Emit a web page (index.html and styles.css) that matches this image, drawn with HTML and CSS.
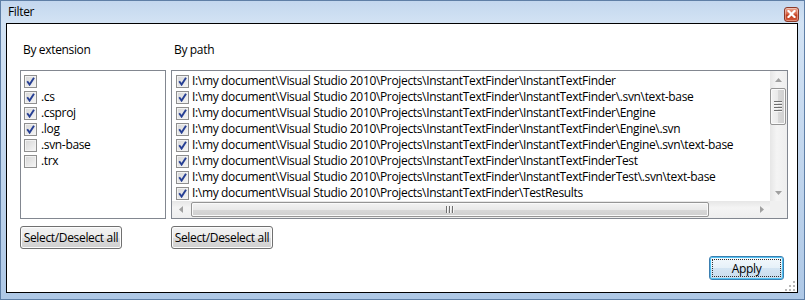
FILE: index.html
```html
<!DOCTYPE html>
<html>
<head><meta charset="utf-8"><title>Filter</title>
<link rel="stylesheet" href="styles.css">
</head>
<body>
<div class="win">
 <div class="title">
  <span class="caption">Filter</span>
  <span class="close"><svg width="9" height="8" viewBox="0 0 9 8"><path d="M1.5 1 L7.5 7 M7.5 1 L1.5 7" stroke="#fff" stroke-width="2.2" stroke-linecap="square"/></svg></span>
 </div>
 <div class="client">
  <div class="cols">
   <div class="col ext">
    <div class="lbl">By extension</div>
    <div class="list">
     <div class="row"><span class="cb on"></span><span></span></div>
     <div class="row"><span class="cb on"></span><span>.cs</span></div>
     <div class="row"><span class="cb on"></span><span>.csproj</span></div>
     <div class="row"><span class="cb on"></span><span>.log</span></div>
     <div class="row"><span class="cb"></span><span>.svn-base</span></div>
     <div class="row"><span class="cb"></span><span>.trx</span></div>
    </div>
    <button class="btn">Select/Deselect all</button>
   </div>
   <div class="col path">
    <div class="lbl">By path</div>
    <div class="list scroll">
     <div class="rows">
      <div class="row"><span class="cb on"></span><span>I:\my document\Visual Studio 2010\Projects\InstantTextFinder\InstantTextFinder</span></div>
      <div class="row"><span class="cb on"></span><span>I:\my document\Visual Studio 2010\Projects\InstantTextFinder\InstantTextFinder\.svn\text-base</span></div>
      <div class="row"><span class="cb on"></span><span>I:\my document\Visual Studio 2010\Projects\InstantTextFinder\InstantTextFinder\Engine</span></div>
      <div class="row"><span class="cb on"></span><span>I:\my document\Visual Studio 2010\Projects\InstantTextFinder\InstantTextFinder\Engine\.svn</span></div>
      <div class="row"><span class="cb on"></span><span>I:\my document\Visual Studio 2010\Projects\InstantTextFinder\InstantTextFinder\Engine\.svn\text-base</span></div>
      <div class="row"><span class="cb on"></span><span>I:\my document\Visual Studio 2010\Projects\InstantTextFinder\InstantTextFinderTest</span></div>
      <div class="row"><span class="cb on"></span><span>I:\my document\Visual Studio 2010\Projects\InstantTextFinder\InstantTextFinderTest\.svn\text-base</span></div>
      <div class="row"><span class="cb on"></span><span>I:\my document\Visual Studio 2010\Projects\InstantTextFinder\TestResults</span></div>
     </div>
     <div class="vbar">
      <span class="arr"><svg width="7" height="4"><path d="M0 4 L3.5 0 L7 4Z" fill="#a0a0a0"/></svg></span>
      <div class="vtrack"><div class="vthumb"><i></i><i></i><i></i><i></i></div></div>
      <span class="arr"><svg width="7" height="4"><path d="M0 0 L3.5 4 L7 0Z" fill="#a0a0a0"/></svg></span>
     </div>
     <div class="hbar">
      <span class="arr"><svg width="4" height="7"><path d="M4 0 L0 3.5 L4 7Z" fill="#a0a0a0"/></svg></span>
      <div class="htrack"><div class="hthumb"><i></i><i></i><i></i></div></div>
      <span class="arr"><svg width="4" height="7"><path d="M0 0 L4 3.5 L0 7Z" fill="#a0a0a0"/></svg></span>
     </div>
     <div class="corner"></div>
    </div>
    <button class="btn">Select/Deselect all</button>
   </div>
  </div>
  <div class="foot">
   <button class="btn apply"><span>Apply</span></button>
   <span class="grip"><svg width="10" height="10" viewBox="0 0 10 10" fill="#b8b8b8"><rect x="8" y="0" width="2" height="2"/><rect x="4" y="4" width="2" height="2"/><rect x="8" y="4" width="2" height="2"/><rect x="0" y="8" width="2" height="2"/><rect x="4" y="8" width="2" height="2"/><rect x="8" y="8" width="2" height="2"/></svg></span>
  </div>
 </div>
</div>
</body>
</html>
```

FILE: styles.css
```css
html{font-family:"Open Sans","Noto Sans",sans-serif;font-size:12px;letter-spacing:-0.34px}
body{margin:0;padding:0;overflow:hidden;background:#fff}

.win{width:805px;height:300px;box-sizing:border-box;border:1px solid #5f7fa6;
 background:linear-gradient(180deg,#c3d7ee 0px,#d3e3f4 22px,#bfd4ec 60%,#aec8e6 100%);
 display:flex;flex-direction:column;padding:0 6px 6px 5px}
.title{height:22px;display:flex;align-items:center;justify-content:space-between}
.caption{padding-left:2px;color:#000;font-size:12px;margin-top:-1px}
.close{width:15px;height:15px;box-sizing:border-box;border:1px solid #8a3a2a;border-radius:3px;margin-right:-1px;margin-top:4px;
 background:linear-gradient(180deg,#e9a58f 0%,#d9664a 45%,#c23e1f 55%,#d2583a 100%);
 display:flex;align-items:center;justify-content:center;box-shadow:inset 0 0 0 1px rgba(255,255,255,.35)}
.close svg{display:block}

.client{flex:1;background:#fff;border:1px solid #000;display:flex;flex-direction:column}
.cols{display:flex;gap:5px;padding-left:13px}
.col{display:flex;flex-direction:column;align-items:flex-start}
.ext{width:146px}
.path{width:617px}
.lbl{height:16px;line-height:16px;padding:18px 0 12px 3px}

.list{box-sizing:border-box;height:149px;width:100%;border:1px solid #828790;background:#fff;padding:2px 0 0 3px;overflow:hidden}
.row{height:16px;display:flex;align-items:center;gap:4px;white-space:nowrap;line-height:16px}
.cb{width:13px;height:13px;box-sizing:border-box;border:1px solid #8f8f8f;flex:none;
 background:linear-gradient(135deg,#d6d6d6,#f6f6f6);box-shadow:inset 0 0 0 1px #f2f2f2;position:relative}
.cb.on::after{content:"";position:absolute;left:1px;top:1px;width:9px;height:9px;
 background:url("data:image/svg+xml,%3Csvg xmlns='http://www.w3.org/2000/svg' width='9' height='9'%3E%3Cpath d='M1.2 4.2 L3.6 7.6 L8 0.8' fill='none' stroke='%23263f94' stroke-width='1.9'/%3E%3C/svg%3E")}

.scroll{position:relative;padding:0}
.rows{position:absolute;left:0;top:0;right:17px;bottom:17px;padding:2px 0 0 4px;overflow:hidden}
.scroll .row{gap:3px}
.vbar{position:absolute;right:0;top:0;bottom:17px;width:17px;background:linear-gradient(90deg,#e6e6e6,#f4f4f4 40%,#eeeeee);display:flex;flex-direction:column}
.hbar{position:absolute;left:0;right:17px;bottom:0;height:17px;background:linear-gradient(180deg,#e6e6e6,#f4f4f4 40%,#eeeeee);display:flex}
.corner{position:absolute;right:0;bottom:0;width:17px;height:17px;background:#f0f0f0}
.arr{width:17px;height:17px;flex:none;display:flex;align-items:center;justify-content:center}
.arr svg{display:block}
.vtrack{flex:1;position:relative}
.vthumb{position:absolute;left:0;right:1px;top:0;height:37px;box-sizing:border-box;border:1px solid #959595;border-radius:2px;
 background:linear-gradient(90deg,#f3f3f3,#e9e9e9 50%,#d8d8d8 51%,#cfcfcf);box-shadow:inset 0 0 0 1px #fafafa;
 display:flex;flex-direction:column;align-items:center;justify-content:center;gap:1px}
.vthumb i{display:block;width:8px;height:1px;background:#6f6f6f;border-bottom:1px solid #f6f6f6}
.htrack{flex:1;position:relative}
.hthumb{position:absolute;left:2px;width:518px;top:1px;bottom:1px;box-sizing:border-box;border:1px solid #959595;border-radius:2px;
 background:linear-gradient(180deg,#f3f3f3,#e9e9e9 50%,#d8d8d8 51%,#cfcfcf);box-shadow:inset 0 0 0 1px #fafafa;
 display:flex;align-items:center;justify-content:center;gap:1px}
.hthumb i{display:block;height:7px;width:1px;background:#6f6f6f;border-right:1px solid #f6f6f6}

.btn{margin-top:7px;height:23px;box-sizing:border-box;padding:0 2px;font:inherit;font-size:12px;letter-spacing:inherit;color:#000;white-space:nowrap;
 border:1px solid #707070;border-radius:3px;
 background:linear-gradient(180deg,#f2f2f2 0%,#ebebeb 50%,#dddddd 51%,#cfcfcf 100%);box-shadow:inset 0 0 0 1px #fcfcfc}
.ext .btn{width:102px}
.path .btn{width:102px}

.foot{flex:1;display:flex;justify-content:flex-end;align-items:flex-end;padding:0 2px 1px 0}
.apply{width:75px;height:24px;margin:0 0 11px 0;border-color:#3c7fb1;padding:2px;
 background:linear-gradient(180deg,#f4f9fd 0%,#e6f1f9 50%,#d4e5f3 51%,#c8ddee 100%);box-shadow:inset 0 0 0 1px #52c3f3}
.apply span{display:flex;height:100%;align-items:center;justify-content:center;border:1px dotted #333;box-sizing:border-box}
.grip{align-self:flex-end;margin-left:1px;margin-bottom:0}
.grip svg{display:block}
```
